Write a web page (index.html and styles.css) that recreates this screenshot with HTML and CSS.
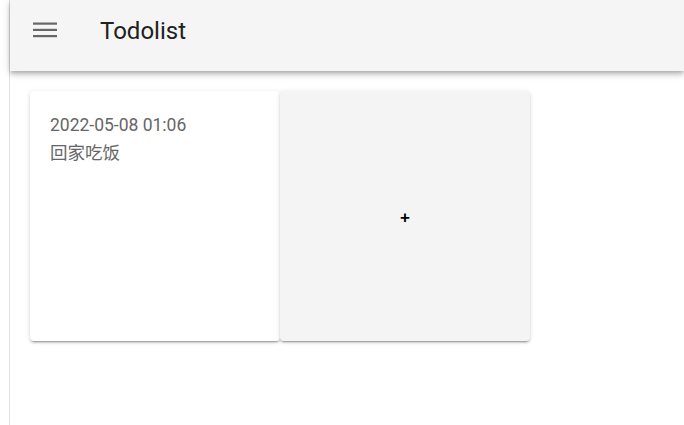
FILE: index.html
```html
<!DOCTYPE html>
<html lang="zh">
<head>
<meta charset="utf-8">
<title>Todolist</title>
<link rel="stylesheet" href="styles.css">
</head>
<body>
<div class="app">
  <aside class="rail"></aside>
  <div class="main">
    <header class="topbar">
      <button class="menu-btn" aria-label="menu">
        <svg width="24" height="16" viewBox="0 0 24 16"><rect x="0" y="0.5" width="24" height="2.2" fill="#666"/><rect x="0" y="6.8" width="24" height="2.2" fill="#666"/><rect x="0" y="13" width="24" height="2.2" fill="#666"/></svg>
      </button>
      <h1 class="title">Todolist</h1>
    </header>
    <section class="cards">
      <div class="card">
        <div class="card-date">2022-05-08 01:06</div>
        <div class="card-text">回家吃饭</div>
      </div>
      <div class="card card-add">+</div>
    </section>
  </div>
</div>
</body>
</html>
```

FILE: styles.css
```css
html, body {
  margin: 0;
  padding: 0;
  height: 100%;
  background: #ffffff;
  font-family: Roboto, "Noto Sans CJK SC", sans-serif;
}
.app {
  display: flex;
  height: 100%;
}
.rail {
  width: 9px;
  flex: none;
  border-right: 1px solid #e0e0e0;
}
.main {
  flex: 1;
  display: flex;
  flex-direction: column;
}
.topbar {
  height: 71px;
  box-sizing: border-box;
  padding-bottom: 11px;
  background: #f5f5f5;
  display: flex;
  align-items: center;
  box-shadow: 0 2px 4px -1px rgba(0,0,0,0.2), 0 4px 5px 0 rgba(0,0,0,0.14), 0 1px 10px 0 rgba(0,0,0,0.12);
  position: relative;
  z-index: 1;
}
.menu-btn {
  margin-left: 23px;
  width: 24px;
  height: 16px;
  padding: 0;
  border: 0;
  background: none;
  display: flex;
}
.title {
  margin: 0 0 0 43px;
  font-size: 24px;
  font-weight: 400;
  color: #212121;
  line-height: 1;
  position: relative;
  top: 1px;
}
.cards {
  display: flex;
  padding: 20px;
}
.card {
  width: 250px;
  height: 250px;
  box-sizing: border-box;
  padding: 20px;
  background: #ffffff;
  border-radius: 4px;
  box-shadow: 0 3px 1px -2px rgba(0,0,0,0.2), 0 2px 2px 0 rgba(0,0,0,0.14), 0 1px 5px 0 rgba(0,0,0,0.12);
  color: #666;
  font-size: 17.5px;
  line-height: 28px;
}
.card-add {
  background: #f4f4f4;
  display: flex;
  align-items: center;
  justify-content: center;
  color: #000;
  font-family: "Liberation Sans", sans-serif;
  font-size: 17px;
  font-weight: 700;
  padding: 3px 0 0 0;
}
```
